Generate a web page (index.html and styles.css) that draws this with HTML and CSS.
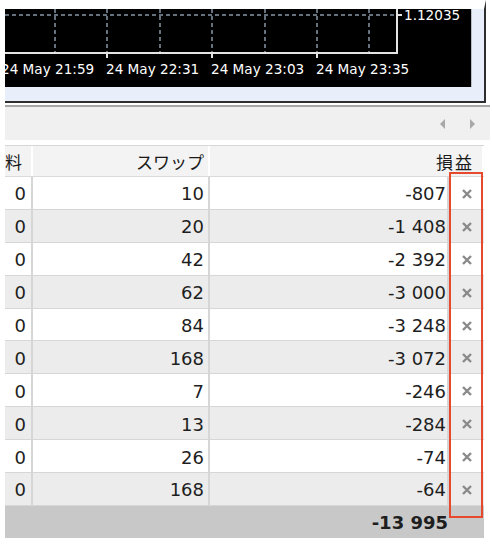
FILE: index.html
```html
<!DOCTYPE html>
<html lang="ja">
<head>
  <meta charset="UTF-8" />
  <title>Terminal</title>
  <link rel="stylesheet" href="styles.css">
</head>
<body>
  <div class="terminal">

    <div class="chart-panel">
      <div class="chart">
        <svg class="chart-svg" width="466" height="78" viewBox="0 0 466 78">
          <g class="grid">
            <line x1="0" y1="6" x2="392" y2="6" />
            <line x1="50" y1="0" x2="50" y2="44" />
            <line x1="102" y1="0" x2="102" y2="44" />
            <line x1="155" y1="0" x2="155" y2="44" />
            <line x1="207" y1="0" x2="207" y2="44" />
            <line x1="260" y1="0" x2="260" y2="44" />
            <line x1="312" y1="0" x2="312" y2="44" />
            <line x1="364" y1="0" x2="364" y2="44" />
          </g>
          <g class="frame">
            <polyline points="0,44 392,44 392,0" />
            <line x1="392" y1="6" x2="397" y2="6" />
            <line x1="102" y1="44" x2="102" y2="49" />
            <line x1="207" y1="44" x2="207" y2="49" />
            <line x1="312" y1="44" x2="312" y2="49" />
          </g>
          <text class="price" x="399" y="11">1.12035</text>
          <text class="time" x="-4" y="65">24 May 21:59</text>
          <text class="time" x="101" y="65">24 May 22:31</text>
          <text class="time" x="206" y="65">24 May 23:03</text>
          <text class="time" x="311" y="65">24 May 23:35</text>
        </svg>
      </div>
    </div>

    <div class="scrollbar">
      <span class="arrow arrow-left"></span>
      <span class="arrow arrow-right"></span>
    </div>

    <div class="table">
      <div class="row head">
        <div class="cell clip">手数料</div>
        <div class="cell">スワップ</div>
        <div class="cell span">損益</div>
      </div>

      <div class="row"><div class="cell">0</div><div class="cell">10</div><div class="cell">-807</div><div class="cell close"><svg width="10" height="10" viewBox="0 0 10 10"><path d="M1 1 L9 9 M9 1 L1 9" /></svg></div></div>
      <div class="row"><div class="cell">0</div><div class="cell">20</div><div class="cell">-1 408</div><div class="cell close"><svg width="10" height="10" viewBox="0 0 10 10"><path d="M1 1 L9 9 M9 1 L1 9" /></svg></div></div>
      <div class="row"><div class="cell">0</div><div class="cell">42</div><div class="cell">-2 392</div><div class="cell close"><svg width="10" height="10" viewBox="0 0 10 10"><path d="M1 1 L9 9 M9 1 L1 9" /></svg></div></div>
      <div class="row"><div class="cell">0</div><div class="cell">62</div><div class="cell">-3 000</div><div class="cell close"><svg width="10" height="10" viewBox="0 0 10 10"><path d="M1 1 L9 9 M9 1 L1 9" /></svg></div></div>
      <div class="row"><div class="cell">0</div><div class="cell">84</div><div class="cell">-3 248</div><div class="cell close"><svg width="10" height="10" viewBox="0 0 10 10"><path d="M1 1 L9 9 M9 1 L1 9" /></svg></div></div>
      <div class="row"><div class="cell">0</div><div class="cell">168</div><div class="cell">-3 072</div><div class="cell close"><svg width="10" height="10" viewBox="0 0 10 10"><path d="M1 1 L9 9 M9 1 L1 9" /></svg></div></div>
      <div class="row"><div class="cell">0</div><div class="cell">7</div><div class="cell">-246</div><div class="cell close"><svg width="10" height="10" viewBox="0 0 10 10"><path d="M1 1 L9 9 M9 1 L1 9" /></svg></div></div>
      <div class="row"><div class="cell">0</div><div class="cell">13</div><div class="cell">-284</div><div class="cell close"><svg width="10" height="10" viewBox="0 0 10 10"><path d="M1 1 L9 9 M9 1 L1 9" /></svg></div></div>
      <div class="row"><div class="cell">0</div><div class="cell">26</div><div class="cell">-74</div><div class="cell close"><svg width="10" height="10" viewBox="0 0 10 10"><path d="M1 1 L9 9 M9 1 L1 9" /></svg></div></div>
      <div class="row"><div class="cell">0</div><div class="cell">168</div><div class="cell">-64</div><div class="cell close"><svg width="10" height="10" viewBox="0 0 10 10"><path d="M1 1 L9 9 M9 1 L1 9" /></svg></div></div>

      <div class="row total">
        <div class="cell"></div>
        <div class="cell"></div>
        <div class="cell">-13 995</div>
        <div class="cell"></div>
      </div>

      <div class="highlight"></div>
    </div>

  </div>
</body>
</html>
```

FILE: styles.css
```css
body {
  margin: 0;
  background: #fff;
  font-family: 'DejaVu Sans', 'Noto Sans CJK JP', sans-serif;
  color: #1e1e1e;
}

.terminal {
  margin-left: 5px;
  width: 485px;
}

/* chart window */

.chart-panel {
  width: 466px;
  border-top: 9px solid #fff;
  border-right: 2px solid #2e2e2e;
  border-bottom: 2px solid #2e2e2e;
  background: #e9eefb;
  padding: 0 13px 14px 0;
}

.chart {
  width: 466px;
  height: 78px;
  background: #000;
  border-right: 1px solid #b8bcc4;
  overflow: hidden;
}

.chart-svg {
  display: block;
}

.grid line {
  stroke: #8796a6;
  stroke-width: 1.5;
  stroke-dasharray: 4 3;
}

.frame polyline,
.frame line {
  fill: none;
  stroke: #e4e4e4;
  stroke-width: 2;
}

.chart-svg text {
  fill: #fff;
  font-family: 'DejaVu Sans', sans-serif;
  font-size: 13.6px;
}

/* scroll strip */

.scrollbar {
  margin-top: 2px;
  border-top: 2px solid #a6a6a6;
  height: 33px;
  background: #f0f0f0;
  display: flex;
  align-items: center;
  justify-content: flex-end;
  gap: 25px;
  padding-right: 15px;
}

.arrow {
  width: 0;
  height: 0;
  border-top: 5px solid transparent;
  border-bottom: 5px solid transparent;
}

.arrow-left {
  border-right: 5px solid #a8a8a8;
}

.arrow-right {
  border-left: 5px solid #a8a8a8;
}

/* positions table */

.table {
  position: relative;
  width: 479px;
  margin-top: 5px;
  border-top: 1px solid #d6d6d6;
}

.row {
  display: grid;
  grid-template-columns: 28px 177px 239px 35px;
  height: 32.9px;
  box-sizing: border-box;
  border-bottom: 1px solid #d6d6d6;
  background: #fff;
  font-size: 18px;
}

.row:nth-child(odd) {
  background: #ececec;
}

.cell {
  display: flex;
  align-items: center;
  justify-content: flex-end;
  padding-top: 2px;
  border-right: 2px solid #d6d6d6;
  white-space: nowrap;
  overflow: hidden;
}

.row .cell:nth-child(1) {
  padding-right: 5px;
}

.row .cell:nth-child(2) {
  padding-right: 4px;
}

.row .cell:nth-child(3) {
  padding-right: 1px;
}

.close {
  justify-content: center;
  border-right: none;
}

.close svg path {
  stroke: #8a8a8a;
  stroke-width: 2.4;
}

.row.head {
  height: 31px;
  background: #f3f3f3;
  border-bottom: 1px solid #dadada;
  font-family: 'Noto Sans CJK JP', sans-serif;
  font-size: 17px;
  color: #1a1a1a;
}

.row.head .cell {
  padding-top: 0;
  border-right: 2px solid #fff;
}

.row.head .clip {
  padding-right: 9px;
}

.row.head .span {
  grid-column: 3 / 5;
  padding-right: 8px;
  letter-spacing: 2px;
}

.row.total {
  height: 32px;
  background: #c8c8c8;
  border-bottom: none;
  font-weight: bold;
}

.row.total .cell {
  border-right: none;
}

.highlight {
  position: absolute;
  left: 444px;
  top: 26px;
  width: 34px;
  height: 346px;
  box-sizing: border-box;
  border: 2px solid #e6492e;
}
```
